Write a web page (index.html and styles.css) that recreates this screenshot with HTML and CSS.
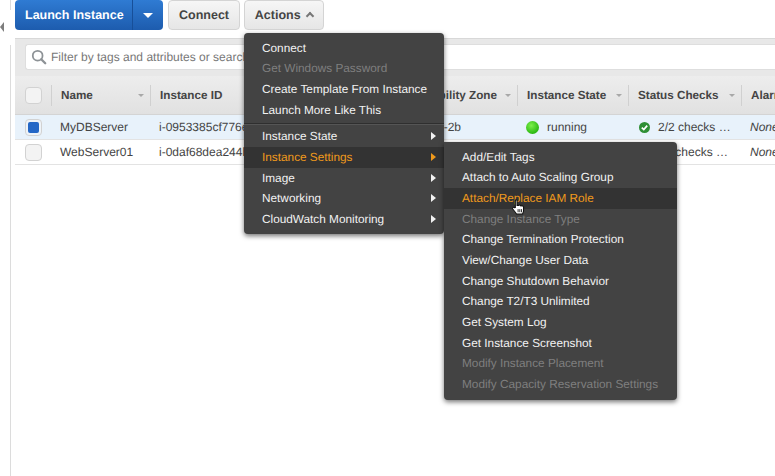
FILE: index.html
```html
<!DOCTYPE html>
<html lang="en">
<head>
    <meta charset="UTF-8">
    <title>Instances</title>
    <link rel="stylesheet" href="styles.css">
</head>
<body>
    <div class="page">
        <div class="side">
            <div class="side-top"></div>
            <div class="side-toggle"><span class="toggle-arrow"></span></div>
            <div class="side-bottom"></div>
        </div>

        <div class="main">
            <div class="toolbar">
                <div class="btn-launch">
                    <span class="launch-label">Launch Instance</span>
                    <span class="launch-caret"><span class="caret-down"></span></span>
                </div>
                <div class="btn btn-connect">Connect</div>
                <div class="btn btn-actions">Actions <span class="caret-up"></span></div>
            </div>

            <div class="filter-bar">
                <div class="search">
                    <svg class="search-icon" width="16" height="16" viewBox="0 0 18 18">
                        <circle cx="7.5" cy="7.5" r="5.5" fill="none" stroke="#8d9296" stroke-width="2"/>
                        <path d="M11.5 11.5 L16 16" stroke="#8d9296" stroke-width="2.6" stroke-linecap="round"/>
                    </svg>
                    <span class="search-text">Filter by tags and attributes or search by keyword</span>
                </div>
            </div>

            <div class="table">
                <div class="thead">
                    <div class="cell-check"><span class="check"></span></div>
                    <div class="th col-name">Name <span class="sort"></span></div>
                    <div class="th col-id">Instance ID</div>
                    <div class="col-gap"></div>
                    <div class="th-zone col-zone"><span class="clip-text">Availability Zone</span><span class="sort"></span></div>
                    <div class="th col-state">Instance State <span class="sort"></span></div>
                    <div class="th col-status">Status Checks <span class="sort"></span></div>
                    <div class="th col-alarm">Alarm Status</div>
                </div>
                <div class="row row-selected">
                    <div class="cell-check"><span class="check check-on"><span class="check-fill"></span></span></div>
                    <div class="td col-name">MyDBServer</div>
                    <div class="td col-id">i-0953385cf776ea1b2</div>
                    <div class="col-gap"></div>
                    <div class="td-zone col-zone"><span class="clip-text">us-east-2b</span></div>
                    <div class="td col-state"><span class="dot"></span>running</div>
                    <div class="td col-status">
                        <svg class="ok-icon" width="11" height="11" viewBox="0 0 11 11">
                            <circle cx="5.5" cy="5.5" r="5.5" fill="#2f8f35"/>
                            <path d="M2.8 5.6 L4.8 7.6 L8.2 3.6" fill="none" stroke="#fff" stroke-width="1.7"/>
                        </svg>
                        2/2 checks …
                    </div>
                    <div class="td col-alarm alarm">None</div>
                </div>
                <div class="row">
                    <div class="cell-check"><span class="check"></span></div>
                    <div class="td col-name">WebServer01</div>
                    <div class="td col-id">i-0daf68dea244b71c4</div>
                    <div class="col-gap"></div>
                    <div class="col-zone"></div>
                    <div class="col-state"></div>
                    <div class="td-tail"><span class="clip-text">2/2 checks …</span></div>
                    <div class="td col-alarm alarm">None</div>
                </div>
            </div>
        </div>
    </div>

    <div class="menu menu-actions">
        <div class="item">Connect</div>
        <div class="item off">Get Windows Password</div>
        <div class="item">Create Template From Instance</div>
        <div class="item">Launch More Like This</div>
        <div class="sep"></div>
        <div class="item">Instance State<span class="arrow"></span></div>
        <div class="item active">Instance Settings<span class="arrow"></span></div>
        <div class="item">Image<span class="arrow"></span></div>
        <div class="item">Networking<span class="arrow"></span></div>
        <div class="item">CloudWatch Monitoring<span class="arrow"></span></div>
    </div>

    <div class="menu menu-settings">
        <div class="item">Add/Edit Tags</div>
        <div class="item">Attach to Auto Scaling Group</div>
        <div class="item active">Attach/Replace IAM Role</div>
        <div class="item off">Change Instance Type</div>
        <div class="item">Change Termination Protection</div>
        <div class="item">View/Change User Data</div>
        <div class="item">Change Shutdown Behavior</div>
        <div class="item">Change T2/T3 Unlimited</div>
        <div class="item">Get System Log</div>
        <div class="item">Get Instance Screenshot</div>
        <div class="item off">Modify Instance Placement</div>
        <div class="item off">Modify Capacity Reservation Settings</div>
    </div>

    <svg class="hand" width="14" height="16" viewBox="0 0 13 15">
        <path d="M4 8 L4 1.6 C4 0.5 5.6 0.5 5.6 1.6 L5.6 6 L7.2 6 C7.4 5.4 8.6 5.4 8.8 6.2 C9.2 5.7 10.2 5.9 10.3 6.7 C10.8 6.4 11.7 6.7 11.7 7.5 L11.7 11 C11.7 12.4 11 13 10.8 14 L5 14 C4.6 12.6 3 11.4 1.6 9.4 C0.9 8.3 2.2 7.3 3 8.1 Z" fill="#fff" stroke="#111" stroke-width="1"/>
        <path d="M6.6 9.5 V12.4 M8.2 9.5 V12.4 M9.8 9.5 V12.4" stroke="#111" stroke-width="0.8"/>
    </svg>
</body>
</html>
```

FILE: styles.css
```css
html, body {
    margin: 0;
    height: 100%;
    background: #fff;
    overflow: hidden;
}
body {
    font-family: "Liberation Sans", Arial, sans-serif;
    font-size: 12px;
    color: #2b2b2b;
    text-rendering: geometricPrecision;
}
.page {
    display: flex;
    height: 476px;
}

/* left nav stub */
.side {
    width: 11px;
    flex: none;
    display: flex;
    flex-direction: column;
}
.side-top {
    height: 10px;
    border-right: 1px solid #dcdcdc;
}
.side-toggle {
    height: 35px;
    display: flex;
    align-items: center;
}
.toggle-arrow {
    border-style: solid;
    border-width: 5px 4px 5px 0;
    border-color: transparent #7d7d7d transparent transparent;
    margin-top: -1px;
}
.side-bottom {
    flex: 1;
    border-right: 1px solid #dcdcdc;
}

.main {
    flex: 1;
    min-width: 0;
    padding-left: 4px;
}

/* toolbar */
.toolbar {
    display: flex;
    height: 30px;
    gap: 5px;
}
.btn-launch {
    display: flex;
    width: 148px;
    height: 30px;
    border-radius: 4px;
    background: linear-gradient(#2f7bd3, #1d5cae);
    color: #fff;
    font-weight: bold;
    font-size: 12.5px;
}
.launch-label {
    width: 118px;
    line-height: 31px;
    padding-left: 10px;
    border-right: 1px solid #174f99;
    box-sizing: border-box;
}
.launch-caret {
    flex: 1;
    display: flex;
    align-items: center;
    justify-content: center;
}
.caret-down {
    border-style: solid;
    border-width: 5px 5px 0 5px;
    border-color: #fff transparent transparent transparent;
}
.btn {
    height: 30px;
    box-sizing: border-box;
    border: 1px solid #d4d4d4;
    border-radius: 4px;
    background: linear-gradient(#f6f6f6, #e6e6e6);
    color: #444;
    font-weight: bold;
    font-size: 12.5px;
    line-height: 29px;
    text-align: center;
}
.btn-connect {
    width: 72px;
}
.btn-actions {
    width: 80px;
    margin-left: -1px;
}
.caret-up {
    display: inline-block;
    width: 4px;
    height: 4px;
    margin-left: 3px;
    border-top: 2px solid #777;
    border-left: 2px solid #777;
    transform: rotate(45deg);
    vertical-align: 0;
}

/* filter */
.filter-bar {
    margin-top: 8px;
    height: 38px;
    box-sizing: border-box;
    padding: 5px 0 6px 10px;
    background: #e8e8e8;
    border-top: 1px solid #d8d8d8;
}
.search {
    height: 26px;
    box-sizing: border-box;
    background: #fff;
    border: 1px solid #dedede;
    border-right: none;
    border-radius: 3px 0 0 3px;
    display: flex;
    align-items: center;
    padding-left: 5px;
    gap: 4px;
    color: #777;
    white-space: nowrap;
}
.search-icon {
    flex: none;
}
.search-text {
    width: 193px;
    overflow: hidden;
}

/* table */
.thead, .row {
    display: flex;
    align-items: center;
    white-space: nowrap;
}
.thead {
    height: 39px;
    background: linear-gradient(#ededed, #e1e1e1);
    border-bottom: 1px solid #d4d4d4;
    box-sizing: border-box;
}
.row {
    height: 25px;
    box-sizing: border-box;
    border-bottom: 1px solid #e3e3e3;
}
.row-selected {
    background: #e8f2fb;
}
.cell-check {
    width: 36px;
    flex: none;
    padding-left: 10px;
    box-sizing: border-box;
}
.check {
    display: block;
    width: 17px;
    height: 17px;
    box-sizing: border-box;
    border: 1px solid #d2d2d2;
    border-radius: 4px;
    background: #f3f3f3;
}
.check-on {
    padding: 2px;
    background: #eef3f8;
}
.check-fill {
    display: block;
    height: 100%;
    border-radius: 2px;
    background: #2467c6;
}
.th {
    position: relative;
    height: 21px;
    line-height: 21px;
    box-sizing: border-box;
    padding-left: 9px;
    border-left: 1px solid #d0d0d0;
    font-weight: bold;
    font-size: 11.7px;
    color: #444;
}
.td {
    padding-left: 9px;
    box-sizing: border-box;
    color: #444;
    overflow: hidden;
}
.sort {
    position: absolute;
    right: 6px;
    top: 9px;
    border-style: solid;
    border-width: 3px 3.5px 0 3.5px;
    border-color: #a8a8a8 transparent transparent transparent;
}
.col-name { width: 99px; flex: none; }
.col-id { width: 94px; flex: none; overflow: hidden; }
.col-gap { width: 200px; flex: none; }
.col-zone { width: 73px; flex: none; }
.col-state { width: 111px; flex: none; display: flex; align-items: center; }
.col-status { width: 113px; flex: none; display: flex; align-items: center; }
.col-alarm { flex: 1; min-width: 0; overflow: hidden; }
.alarm { font-style: italic; }

/* these cells run in under the open menus, so their text is cut on the left */
.th-zone, .td-zone, .td-tail {
    display: flex;
    justify-content: flex-end;
    overflow: hidden;
    box-sizing: border-box;
    color: #444;
}
.th-zone {
    position: relative;
    height: 21px;
    line-height: 21px;
    padding-right: 20px;
    font-weight: bold;
    font-size: 11.7px;
}
.td-zone {
    padding-right: 56px;
}
.td-tail {
    width: 64px;
    margin-left: 49px;
    padding-right: 13px;
    flex: none;
}
.clip-text {
    flex: none;
}
.dot {
    width: 13px;
    height: 13px;
    margin-right: 8px;
    border-radius: 50%;
    background: radial-gradient(circle at 40% 35%, #7cf04a, #27b50f 75%);
}
.ok-icon {
    margin: 0 8px 0 2px;
}

/* dropdown menus */
.menu {
    position: absolute;
    box-sizing: border-box;
    background: #434343;
    border-radius: 4px;
    box-shadow: 0 2px 5px rgba(0, 0, 0, 0.55);
    color: #f2f2f2;
    font-size: 11.8px;
}
.menu-actions {
    left: 244px;
    top: 33px;
    width: 200px;
    height: 201px;
    padding-top: 4.5px;
    z-index: 2;
}
.menu-settings {
    left: 444px;
    top: 142px;
    width: 233px;
    height: 258px;
    padding-top: 4.5px;
    z-index: 3;
    border-radius: 0 4px 4px 4px;
}
.item {
    position: relative;
    height: 20.7px;
    line-height: 20.7px;
    padding-left: 18px;
    white-space: nowrap;
}
.item.off {
    color: #7f7f7f;
}
.item.active {
    background: #333;
    color: #f09a1c;
}
.sep {
    height: 1px;
    margin: 3px 0 1px;
    background: #2f2f2f;
    border-bottom: 1px solid #555;
}
.arrow {
    position: absolute;
    right: 8px;
    top: 6px;
    border-style: solid;
    border-width: 4px 0 4px 5px;
    border-color: transparent transparent transparent #f2f2f2;
}
.active .arrow {
    border-left-color: #f09a1c;
}
.hand {
    position: absolute;
    left: 511px;
    top: 199px;
    z-index: 4;
}
```
